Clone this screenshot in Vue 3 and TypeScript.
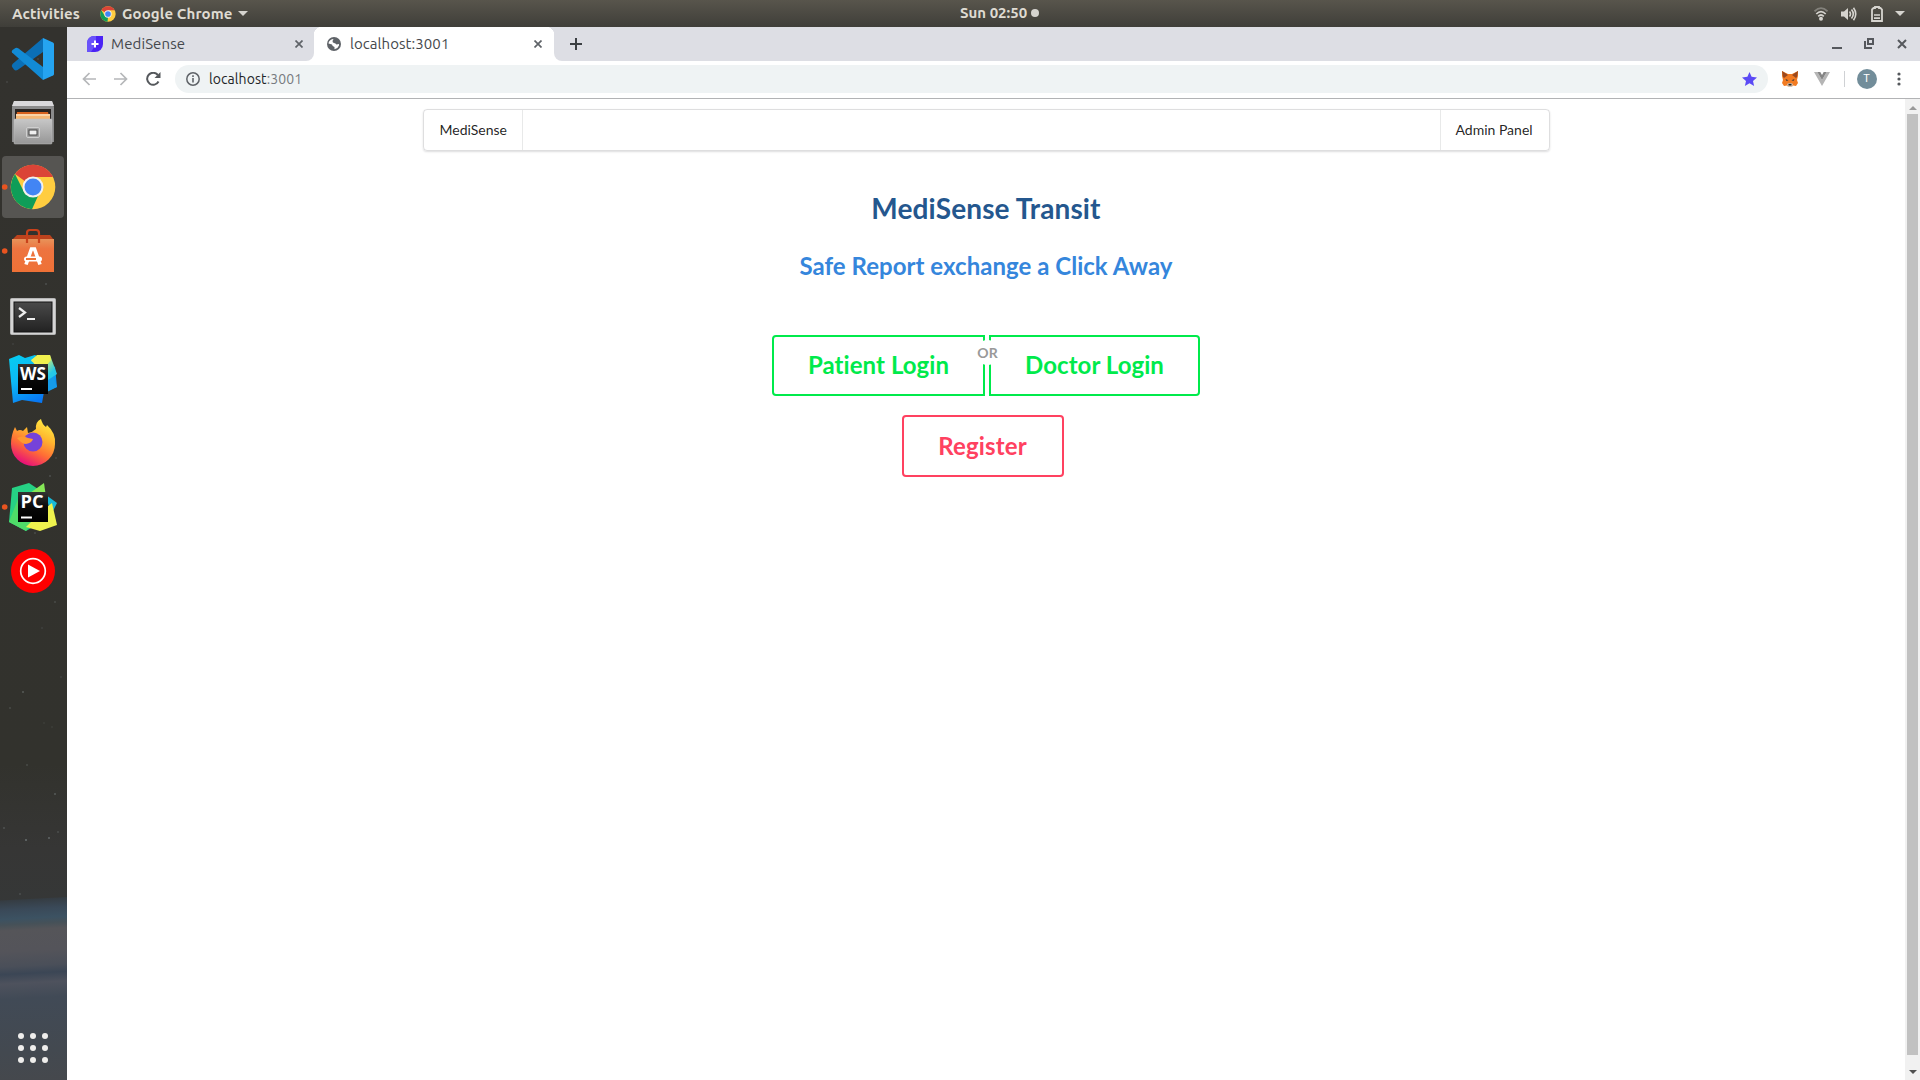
<script setup lang="ts">
const stars: [number, number, number][] = [
  [55, 602, 0.25], [42, 628, 0.15], [23, 692, 0.4], [10, 708, 0.25], [61, 677, 0.15],
  [44, 723, 0.12], [52, 727, 0.12], [27, 765, 0.25], [55, 794, 0.4], [4, 828, 0.3],
  [26, 840, 0.6], [49, 838, 0.5], [58, 832, 0.25], [20, 894, 0.25], [38, 59, 0.2],
  [7, 82, 0.2], [46, 284, 0.3], [13, 344, 0.15], [50, 476, 0.3], [35, 533, 0.25], [56, 458, 0.2],
]
const dots = [0, 1, 2, 3, 4, 5, 6, 7, 8]
</script>

<template>
  <div class="desktop">
    <header class="topbar">
      <span class="activities">Activities</span>
      <svg class="mini-chrome" viewBox="0 0 48 48">
        <circle cx="24" cy="24" r="23" fill="#ffcd40" />
        <path d="M24 24 4 12.500A23 23 0 0 1 44 13H24Z" fill="#db4437" />
        <path d="M4 12.500 14.500 30 24 34 22.500 47A23 23 0 0 1 4 12.500Z" fill="#0f9d58" />
        <circle cx="24" cy="24" r="11" fill="#f1f1f1" />
        <circle cx="24" cy="24" r="8.500" fill="#4285f4" />
      </svg>
      <span class="app-name">Google Chrome</span>
      <i class="caret"></i>
      <div class="clock"><span>Sun 02:50</span><i></i></div>
      <div class="tray">
        <svg width="14" height="14" viewBox="0 0 14 14" fill="none" stroke-width="1.700">
          <path d="M.5 4.300Q7-2 13.500 4.300" stroke="#83817b" />
          <path d="M2.300 7Q7 2.200 11.700 7" stroke="#d6d4cf" />
          <path d="M4.200 9.300Q7 6.700 9.800 9.300" stroke="#d6d4cf" />
          <circle cx="7" cy="11.800" r="2" fill="#d6d4cf" />
        </svg>
        <svg class="speaker" width="16" height="14" viewBox="0 0 16 14" fill="none" stroke="#d6d4cf" stroke-width="1.600">
          <path d="M0 4.500h3L7 1v12L3 9.500H0Z" fill="#d6d4cf" stroke="none" />
          <path d="M8.500 4.500q2 2.500 0 5M10.500 2.500q3.600 4.500 0 9M12.500.7q4.500 6.300 0 12.600" />
        </svg>
        <svg class="battery" width="12" height="16" viewBox="0 0 12 16">
          <path d="M1 3.500 2.500 2H4V1h4v1h1.500L11 3.500V15H1Z" fill="none" stroke="#d6d4cf" stroke-width="1.800" />
          <path d="M3 8.200h6v1.600H3ZM3 11.200h6v1.800H3Z" fill="#d6d4cf" />
        </svg>
        <i class="caret"></i>
      </div>
    </header>

    <div class="workspace">
      <aside class="dock">
        <svg width="67" height="1053" viewBox="0 27 67 1053">
          <defs>
            <linearGradient id="sky" x1="0" y1="0" x2="0" y2="1">
              <stop offset="0" stop-color="#33322e" />
              <stop offset=".7" stop-color="#32322d" />
              <stop offset=".78" stop-color="#363635" />
              <stop offset="1" stop-color="#343b3e" />
            </linearGradient>
            <linearGradient id="earth" x1="0" y1="0" x2="0" y2="1">
              <stop offset="0" stop-color="#353c42" />
              <stop offset=".05" stop-color="#3a4958" />
              <stop offset=".1" stop-color="#3c5262" />
              <stop offset=".13" stop-color="#465158" />
              <stop offset=".16" stop-color="#555559" />
              <stop offset=".27" stop-color="#54545a" />
              <stop offset=".35" stop-color="#4a4f59" />
              <stop offset=".39" stop-color="#3b4655" />
              <stop offset=".44" stop-color="#4e525d" />
              <stop offset=".52" stop-color="#414a56" />
              <stop offset=".8" stop-color="#434950" />
              <stop offset="1" stop-color="#46484c" />
            </linearGradient>
            <linearGradient id="cab" x1="0" y1="0" x2="0" y2="1">
              <stop offset="0" stop-color="#c7c7c7" /><stop offset="1" stop-color="#969696" />
            </linearGradient>
            <linearGradient id="bag" x1="0" y1="0" x2="0" y2="1">
              <stop offset="0" stop-color="#e8935a" /><stop offset=".3" stop-color="#ed7440" /><stop offset="1" stop-color="#ef7136" />
            </linearGradient>
            <linearGradient id="term" x1="0" y1="0" x2="0" y2="1">
              <stop offset="0" stop-color="#4a4a4a" /><stop offset="1" stop-color="#222" />
            </linearGradient>
            <linearGradient id="ff" x1=".8" y1="0" x2=".3" y2="1">
              <stop offset="0" stop-color="#fff044" /><stop offset=".35" stop-color="#ffb52e" />
              <stop offset=".65" stop-color="#ff6b36" /><stop offset="1" stop-color="#e50680" />
            </linearGradient>
            <linearGradient id="wsy" x1="0" y1="0" x2="1" y2="1">
              <stop offset=".3" stop-color="#f4f45a" /><stop offset=".75" stop-color="#25c8e8" />
            </linearGradient>
            <linearGradient id="wsb" x1="0" y1="0" x2=".5" y2="1">
              <stop offset="0" stop-color="#06cdf1" /><stop offset=".5" stop-color="#0cb8f5" /><stop offset="1" stop-color="#0878f4" />
            </linearGradient>
            <linearGradient id="black" x1="0" y1="0" x2="0" y2="1">
              <stop offset="0" stop-color="#333" /><stop offset=".5" stop-color="#080808" /><stop offset="1" stop-color="#000" />
            </linearGradient>
          </defs>
          <rect y="27" width="67" height="1053" fill="url(#sky)" />
          <rect y="899" width="67" height="190" fill="url(#earth)" transform="rotate(-3 33 980) scale(1.300 1) translate(-8 0)" />
          <circle v-for="(s, i) in stars" :key="i" :cx="s[0]" :cy="s[1]" r="1" fill="#8b9698" :opacity="s[2]" />

          <path d="M12.500 67.500Q11 66 12.500 64L43 38V52L17.500 70Q15.500 71 14 69.500Z" fill="#0b6fb6" />
          <path d="M12 52.500q-.8-1.500.5-2.500l3-2q1.500-.5 3 .5L43 67V80Z" fill="#128bd6" />
          <path d="M43 38 53 42.500q1 .5 1 1.500V74q0 1-1 1.500L43 80Z" fill="#25a4f1" />

          <path d="M14 101h38l2 6v35H12v-35Z" fill="#8b8b8b" />
          <path d="M14 101h38l2 5H12Z" fill="#d9d8da" />
          <path d="M15 109h36v13H15Z" fill="#292421" />
          <path d="M17 112h31l2 8H16l1-8Z" fill="#d8621e" /><path d="M16 114h34v5H16Z" fill="#f6b875" />
          <path d="M16 115h34" stroke="#fff0dc" />
          <rect x="14" y="119" width="38" height="25" rx="1" fill="url(#cab)" stroke="#c2c2c2" stroke-width=".5" />
          <rect x="26.500" y="127.500" width="13" height="10" rx="1.500" fill="#9f9f9f" stroke="#cfcfcf" />
          <rect x="29" y="130" width="8" height="5" fill="#efefef" stroke="#444" />

          <rect x="2" y="156" width="62" height="62" rx="4" fill="#565552" />
          <g transform="translate(33 187)">
            <circle r="22.300" fill="#ffcd40" />
            <path d="M0 0-18-13A22.300 22.300 0 0 1 20-10H0Z" fill="#db4437" />
            <path d="M-18-13-8 7 5 9-1 22.300A22.300 22.300 0 0 1-18-13Z" fill="#0f9d58" />
            <circle r="10.500" fill="#f1f1f1" /><circle r="8.500" fill="#4285f4" />
          </g>

          <path d="M12 240 17 235H50L54 240Z" fill="#bd431d" />
          <path d="M12 239H54V272H12Z" fill="url(#bag)" />
          <path d="M27 243V233q0-3 3-3h6q3 0 3 3v10" fill="none" stroke="#c9411b" stroke-width="2.200" />
          <path d="M26 264.500 31.500 249h3L40 264.500" fill="none" stroke="#fff" stroke-width="3.600" />
          <rect x="24" y="256.500" width="18" height="5" rx="2.500" fill="#fff" /><path d="M26 259h10" stroke="#ee7338" stroke-width="2" />

          <rect x="10.500" y="298.500" width="45" height="36" rx="1" fill="#d5d5d5" stroke="#b5b5b5" />
          <rect x="14" y="302" width="38" height="30" fill="url(#term)" stroke="#151515" />
          <path d="m19 308 6 4.500-6 4.500" fill="none" stroke="#eee" stroke-width="2.200" /><path d="M27 319h8" stroke="#eee" stroke-width="2" />

          <path d="M9 359 19 355l6 3 10-3 20 12 2 20-13 5-2 11-20-3-9 3Z" transform="translate(0 0)" fill="url(#wsb)" clip-path="inset(0 0 0 0)" />
          <path d="M36 364h14l7 23-14 7Z" fill="#159be9" />
          <path d="M31 360 38 355H50L57 374 48 380Z" fill="url(#wsy)" />
          <path d="M31 361 37 355H50l1 5-5 6Z" fill="#f1f14e" />
          <rect x="18" y="364" width="30" height="30" fill="url(#black)" />
          <text x="20" y="380" class="badge" textLength="26" lengthAdjust="spacingAndGlyphs">WS</text><path d="M21 389h11" stroke="#fff" stroke-width="2" />

          <path d="M15 427 17 431q3-2 6 0l4-4 1 6q5-1 8-4-1-7 5-10 1 5 5 8l1-2q9 8 8 19a22 22 0 0 1-44 0q0-9 4-17Z" fill="url(#ff)" />
          <circle cx="33" cy="442" r="9.500" fill="#7542d9" />
          <path d="M17 438q6-3 11 0l5 1q-1 4-7 5-4 0-9-6Z" fill="#ff9932" />

          <path d="M12 488 29 483l15 10 4 25-22 13-17-9Z" fill="#26d184" />
          <path d="M9 522 18 499l16 18-8 14Z" fill="#4fdb68" /><path d="M30 493 44 483l2 14Z" fill="#86e757" />
          <path d="M46 495 57 503l-6 12Z" fill="#18b9d8" />
          <path d="M42 511 52 503l5 22-17 6-14-4Z" fill="#eff34e" />
          <rect x="18" y="492" width="30" height="30" fill="url(#black)" />
          <text x="20.500" y="508" class="badge" textLength="23" lengthAdjust="spacingAndGlyphs">PC</text><path d="M21 517.500h11" stroke="#fff" stroke-width="2" />

          <circle cx="33" cy="571" r="22" fill="#f00" /><circle cx="33" cy="571" r="12.300" fill="none" stroke="#fff" stroke-width="1.700" />
          <path d="m28 564.500 12 6.500-12 6.500Z" fill="#fff" />
          <g fill="#e95420"><circle cx="4.700" cy="187" r="2.800" /><circle cx="4.700" cy="251" r="2.800" /><circle cx="4.700" cy="507" r="2.800" /></g>
          <circle v-for="d in dots" :key="d" :cx="21 + (d % 3) * 12" :cy="1036 + Math.floor(d / 3) * 12" r="3" fill="#efeeec" />
        </svg>
      </aside>

      <section class="browser">
        <div class="tabs">
          <div class="tab first">
            <svg width="16" height="16" viewBox="0 0 16 16">
              <path d="M7 0h9v8a8 8 0 0 1-8 8H0V7a7 7 0 0 1 7-7Z" fill="#4b23f5" /><path d="M0 16V7a7 7 0 0 1 7-7h2v8l-5 8Z" fill="#6952fa" />
              <path d="M8 4.500v7M4.500 8h7" stroke="#fff" stroke-width="2" />
            </svg>
            <span>MediSense</span>
            <svg class="close" width="8" height="8" viewBox="0 0 8 8"><path d="m.5.5 7 7m0-7-7 7" stroke="#5f6368" stroke-width="1.700" /></svg>
          </div>
          <div class="tab active">
            <svg width="14" height="14" viewBox="0 0 14 14">
              <circle cx="7" cy="7" r="7" fill="#5f6368" />
              <path d="M1.500 6.500Q1.800 3.500 5 2.300l1.500-.4-1 2 .5 1.800H7.500l2 1.700 2.500-.5v1.500q-1 3-4.500 3.800V10l-1.800-1L5 7.500 1.500 6.500Z" fill="#fff" />
              <path d="M7 2.200 9.500 3v1.500L7 6.500ZM2 8h3v3.500Z" fill="#5f6368" />
            </svg>
            <span>localhost:3001</span>
            <svg class="close" width="8" height="8" viewBox="0 0 8 8"><path d="m.5.5 7 7m0-7-7 7" stroke="#5f6368" stroke-width="1.700" /></svg>
          </div>
          <svg class="plus" width="12" height="12" viewBox="0 0 12 12"><path d="M6 0v12M0 6h12" stroke="#3c4043" stroke-width="2" /></svg>
          <div class="winctl">
            <svg width="76" height="14" viewBox="0 0 76 14" fill="none" stroke="#55585d" stroke-width="2">
              <path d="M0 11h10M36 2h5v5h-5ZM33 4v7h7" /><path d="m66 3 8 8m0-8-8 8" />
            </svg>
          </div>
        </div>

        <div class="toolbar">
          <svg class="nav" width="79" height="14" viewBox="0 0 79 14" fill="none" stroke-width="1.700">
            <path d="M14 7H1.500M7.500 1l-6 6 6 6M32 7h12.500M38.500 1l6 6-6 6" stroke="#b5b7b9" />
            <path d="M76.500 9.500A6 6 0 1 1 75.800 3" stroke="#55585c" stroke-width="2" /><path d="M78.500 0v6h-6Z" fill="#55585c" />
          </svg>
          <div class="omnibox">
            <svg width="14" height="14" viewBox="0 0 14 14" fill="none" stroke="#5f6368"><circle cx="7" cy="7" r="6.200" stroke-width="1.500" /><path d="M7 6v4.500M7 3.300v1.600" stroke-width="1.600" /></svg>
            <span class="url">localhost<em>:3001</em></span>
            <svg class="star" width="15" height="14" viewBox="0 0 15 14"><path d="m7.500 0 2.100 4.800 5.400.6-4 3.600 1.100 5-4.600-2.700L2.900 14 4 9 0 5.400l5.400-.6Z" fill="#5b4af5" /></svg>
          </div>
          <svg class="fox" width="16" height="16" viewBox="0 0 16 16">
            <path d="M0 0 6 3h4l6-3v5l-1 4 1 3-2 3-3-.5L9.500 16h-3L5 14.500 2 15 0 12l1-3-1-4Z" fill="#f27b22" />
            <path d="m0 0 6 4-4 3-1-1ZM16 0l-6 4 4 3 1-1Z" fill="#9b491f" /><path d="m3.500 8 3 1.300-2 .7ZM12.500 8l-3 1.300 2 .7Z" fill="#36383c" />
            <path d="M5 13 7 12h2l2 1-1 3H6Z" fill="#d5c4b5" /><path d="M6.500 12.800h3v1.700h-3Z" fill="#29231f" />
          </svg>
          <svg class="vue" width="16" height="14" viewBox="0 0 16 14"><path d="M0 0h3.300L8 8l4.700-8H16L8 14Z" fill="#b5b5b5" /><path d="M3.300 0h3L8 3l1.700-3h3L8 8Z" fill="#858585" /></svg>
          <i class="sep"></i>
          <span class="avatar">T</span>
          <svg class="kebab" width="4" height="14" viewBox="0 0 4 14" fill="#55585c"><circle cx="2" cy="2" r="1.600" /><circle cx="2" cy="7" r="1.600" /><circle cx="2" cy="12" r="1.600" /></svg>
        </div>

        <div class="viewport">
          <main class="page">
            <nav class="menu"><a class="brand">MediSense</a><a class="admin">Admin Panel</a></nav>
            <h1>MediSense Transit</h1>
            <h2>Safe Report exchange a Click Away</h2>
            <div class="buttons">
              <button class="btn left">Patient Login</button>
              <div class="or"><span>OR</span></div>
              <button class="btn right">Doctor Login</button>
            </div>
            <button class="btn register">Register</button>
          </main>
          <div class="scrollbar"><i class="up"></i><div class="thumb"></div><i class="down"></i></div>
        </div>
      </section>
    </div>
  </div>
</template>

<style>
body { margin: 0; overflow: hidden; }
</style>

<style scoped>
* { box-sizing: border-box; }
svg { display: block; flex: none; }
.desktop { width: 1920px; height: 1080px; display: flex; flex-direction: column; overflow: hidden; background: #fff; font-family: Ubuntu, "Noto Sans", sans-serif; }
.topbar { position: relative; height: 27px; flex: none; display: flex; align-items: center; background: linear-gradient(#58554c, #3f3e39); color: #dfdbd2; font-size: 15px; font-weight: 600; letter-spacing: .12px; white-space: nowrap; }
.topbar span { padding-bottom: 1px; }
.activities { width: 68px; margin-left: 12px; }
.mini-chrome { width: 16px; height: 16px; margin: 0 6px 0 20px; }
.app-name { width: 111px; }
.caret { border: 5px solid transparent; border-top-color: #d6d4cf; border-bottom: 0; margin-left: 5px; }
.clock { position: absolute; left: 960px; top: 0; height: 26px; display: flex; align-items: center; letter-spacing: 0; }
.clock span { width: 71px; }
.clock i { width: 8px; height: 8px; border-radius: 50%; background: #d6d4cf; }
.tray { margin-left: auto; display: flex; align-items: center; padding-right: 15px; }
.speaker { margin-left: 13px; }
.battery { margin-left: 14px; }
.tray .caret { margin-left: 12px; }
.workspace { flex: 1; display: flex; min-height: 0; }
.dock { width: 67px; flex: none; }
.badge { font: 700 17px "Open Sans", sans-serif; fill: #fff; }
.browser { flex: 1; min-width: 0; display: flex; flex-direction: column; }
.tabs { height: 34px; flex: none; display: flex; align-items: center; background: #fff; }
.tab { height: 34px; flex: none; display: flex; align-items: center; font-size: 15px; color: #45484c; white-space: nowrap; }
.tab span { padding-bottom: 2px; }
.first { width: 247px; padding: 0 11px 0 20px; background: #dddee4; border-bottom-right-radius: 8px; }
.first span { margin-left: 8px; letter-spacing: .1px; }
.active { width: 240px; padding: 0 12px 0 13px; background: radial-gradient(circle at 8px 8px, #fff 8px, #dddee4 8.5px) 0 0 / 8px 8px no-repeat, radial-gradient(circle at 0 8px, #fff 8px, #dddee4 8.5px) 100% 0 / 8px 8px no-repeat, #fff; }
.active span { margin-left: 9px; letter-spacing: .06px; }
.close { margin-left: auto; }
.plus { width: 44px; height: 34px; padding: 11px 16px; background: #dddee4; border-bottom-left-radius: 8px; }
.winctl { flex: 1; height: 34px; display: flex; justify-content: flex-end; align-items: center; padding-right: 12px; background: #dddee4; }
.toolbar { height: 38px; flex: none; display: flex; align-items: center; padding: 0 19px 1px 15px; border-bottom: 1px solid #b2b3b5; }
.nav { margin-top: -1px; }
.omnibox { width: 1593px; height: 28px; margin: -1px 0 0 14px; display: flex; align-items: center; padding: 0 11px; border-radius: 14px; background: #eff3f4; }
.url { margin-left: 9px; font-size: 14px; letter-spacing: .08px; color: #222427; white-space: nowrap; }
.url em { font-style: normal; color: #777b7f; }
.star { margin-left: auto; }
.fox { margin-left: 14px; }
.vue { margin-left: 16px; }
.sep { width: 1px; height: 16px; margin-left: 14px; background: #cfd1d4; }
.avatar { width: 20px; height: 20px; margin-left: 12px; border-radius: 50%; background: #728d9a; color: #fff; font: 11px/20px Roboto, sans-serif; text-align: center; }
.kebab { margin-left: 20.5px; }
.viewport { flex: 1; display: flex; min-height: 0; }
.page { flex: 1; display: flex; flex-direction: column; align-items: center; padding-top: 10px; font-family: Lato, sans-serif; font-variant-ligatures: none; }
.menu { width: 1127px; height: 42px; margin-left: 1px; display: flex; justify-content: space-between; border: 1px solid rgba(34, 36, 38, .15); border-radius: 4px; box-shadow: 0 1px 2px rgba(34, 36, 38, .15); color: rgba(0, 0, 0, .87); font-size: 14px; line-height: 40px; }
.brand { padding: 0 0 0 15.5px; width: 99px; border-right: 1px solid rgba(34, 36, 38, .1); }
.admin { padding: 0 0 0 14.5px; width: 109px; border-left: 1px solid rgba(34, 36, 38, .1); white-space: nowrap; }
h1 { margin: 39px 0 0; font-size: 28px; line-height: 36px; letter-spacing: .12px; color: #24578e; }
h2 { margin: 24px 0 0; font-size: 24px; line-height: 31px; letter-spacing: .03px; color: #3586dc; }
.buttons { display: flex; margin: 54px 0 0; }
.btn { height: 61px; border: 2px solid #00ea4b; background: #fff; color: #00ea4b; padding: 0 0 2px; font: 700 24px/24px Lato, sans-serif; font-variant-ligatures: none; letter-spacing: .06px; border-radius: 4px; }
.left { width: 213px; border-radius: 4px 0 0 4px; }
.right { width: 211px; border-radius: 0 4px 4px 0; }
.or { position: relative; width: 4px; }
.or span { position: absolute; left: -10px; top: 5px; width: 25px; height: 25px; border-radius: 50%; background: #fff; color: #999; font-size: 14px; font-weight: 700; line-height: 25px; text-align: center; }
.register { width: 162px; height: 62px; margin: 19px 7px 0 0; padding: 0; letter-spacing: .15px; border-color: #ff4160; color: #ff4160; }
.scrollbar { width: 15px; display: flex; flex-direction: column; align-items: center; background: #f1f1f1; }
.up { margin: 7px 0 4px; border: 4px solid transparent; border-bottom-color: #999; border-top: 0; }
.thumb { flex: 1; width: 11px; background: #c1c1c1; }
.down { margin: 15px 0 6px; border: 4px solid transparent; border-top-color: #505050; border-bottom: 0; }
</style>
